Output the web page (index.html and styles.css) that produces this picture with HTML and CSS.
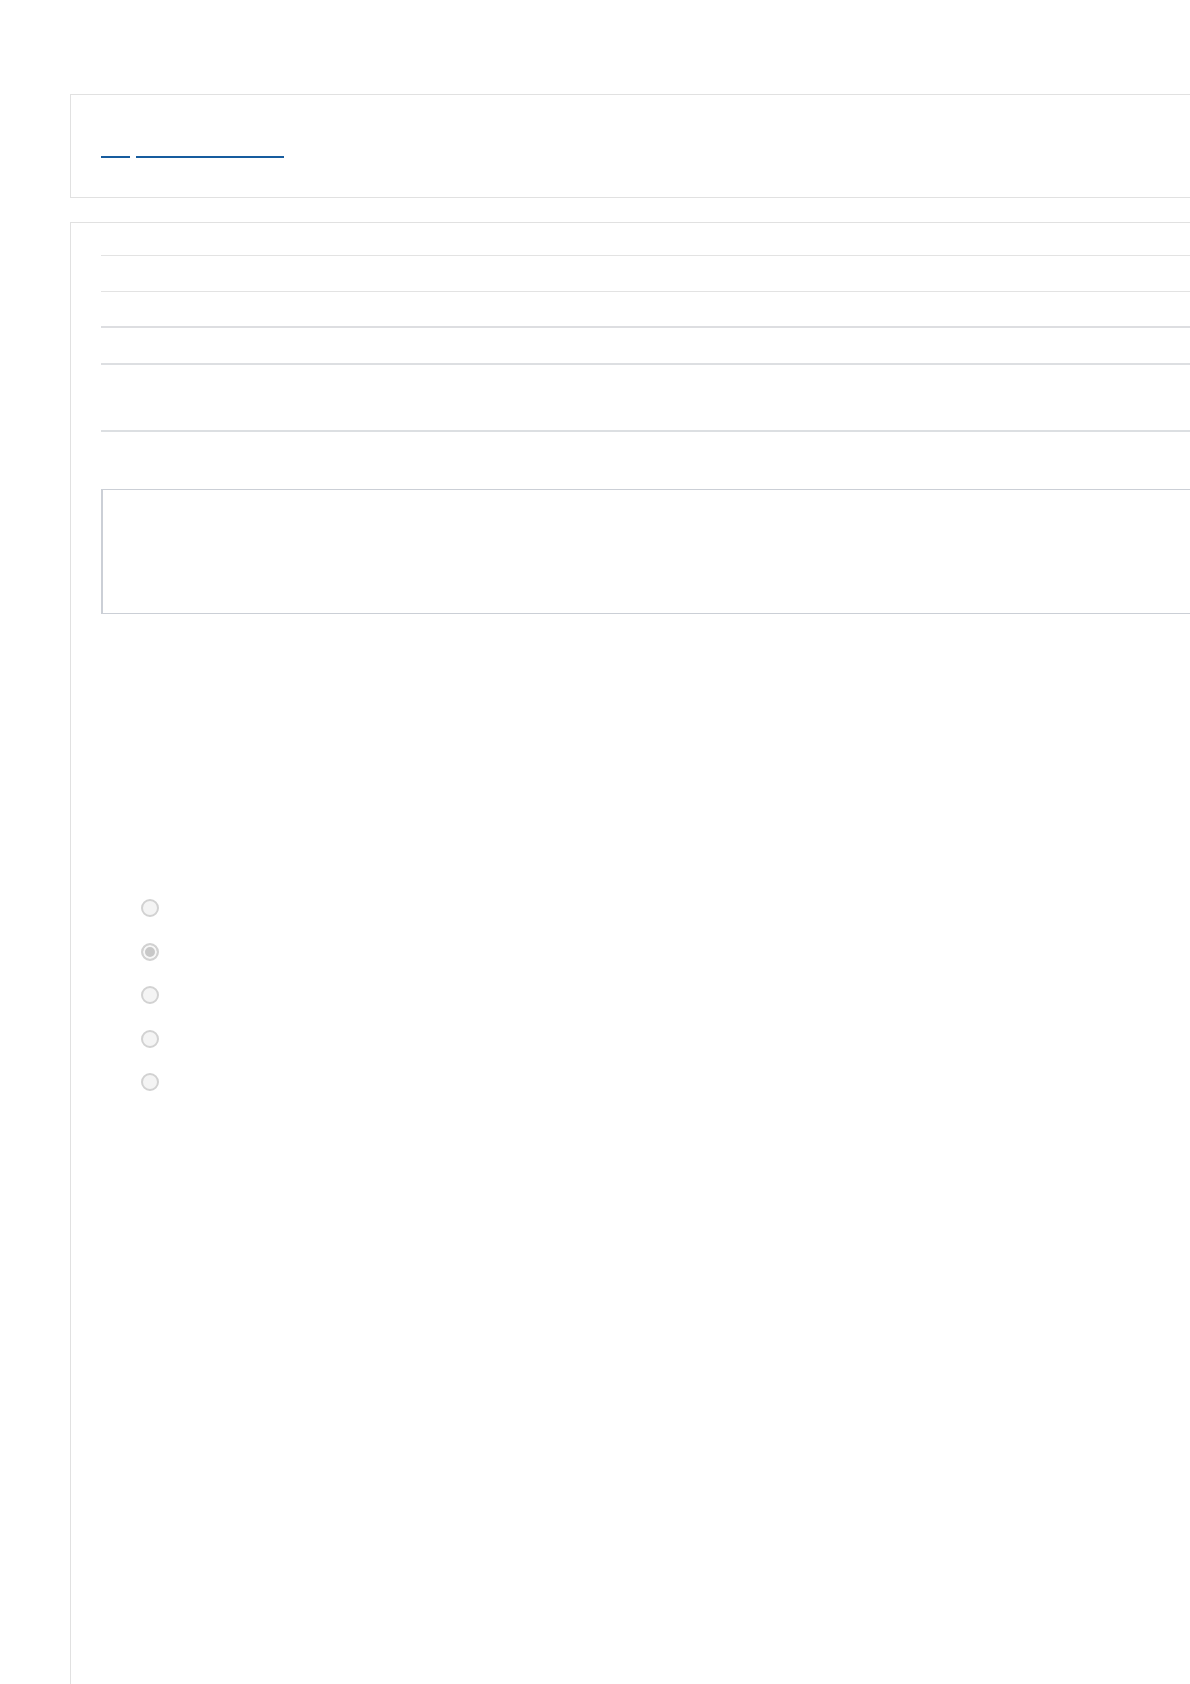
FILE: index.html
```html
<!DOCTYPE html>
<html lang="en">
<head>
  <meta charset="UTF-8">
  <title>Form</title>
  <link rel="stylesheet" href="styles.css">
</head>
<body>
  <div class="page">
    <div class="card head">
      <div class="crumbs">
        <span class="crumb short"></span>
        <span class="crumb long"></span>
      </div>
    </div>

    <div class="card form">
      <div class="row r1"></div>
      <div class="row r2"></div>
      <div class="row r3"></div>
      <div class="row r4"></div>
      <div class="row r5"></div>

      <div class="answer"></div>

      <div class="choices">
        <input type="radio" name="opt" disabled>
        <input type="radio" name="opt" disabled checked>
        <input type="radio" name="opt" disabled>
        <input type="radio" name="opt" disabled>
        <input type="radio" name="opt" disabled>
      </div>
    </div>
  </div>
</body>
</html>
```

FILE: styles.css
```css
html, body {
  margin: 0;
  background-color: #fff;
  font-family: 'Liberation Sans', Arial, sans-serif;
}
.page {
  padding: 94px 0 0 70px;
  overflow: hidden;
  height: 1590px;
}
.card {
  border: 1px solid #e1e1e1;
  margin-right: -20px;
}
.head {
  padding-left: 30px;
  box-sizing: border-box;
  height: 104px;
}
.crumbs {
  display: flex;
  gap: 6px;
  padding-top: 61px;
}
.crumb {
  display: block;
  height: 0;
  border-bottom: 2px solid #175c9e;
}
.crumb.short {
  width: 29px;
}
.crumb.long {
  width: 148px;
}
.form {
  margin-top: 24px;
  padding: 32px 0 0 30px;
  background-color: #fff;
  border-bottom: none;
  height: 1500px;
}
.row {
  border-bottom: 1px solid #e3e3e3;
}
.r1 { height: 0; }
.r2 { height: 35px; }
.r3 { height: 34px; border-bottom: 2px solid #dddee1; }
.r4 { height: 35px; border-bottom: 2px solid #dddfe2; }
.r5 { height: 65px; border-bottom: 2px solid #dcdfe2; }
.answer {
  margin-top: 57px;
  height: 123px;
  border: 1px solid #cbcfd6;
  border-left-width: 2px;
  border-right: none;
  background-color: #fff;
}
.choices {
  display: flex;
  flex-direction: column;
  gap: 25.5px;
  padding: 285px 0 0 40px;
}
.choices input {
  appearance: none;
  -webkit-appearance: none;
  width: 18px;
  height: 18px;
  margin: 0;
  border: 2px solid #d2d2d2;
  border-radius: 50%;
  background-color: #f4f4f4;
}
.choices input:checked {
  background-color: #c8c8c8;
  box-shadow: inset 0 0 0 2px #f7f7f7;
}
```
